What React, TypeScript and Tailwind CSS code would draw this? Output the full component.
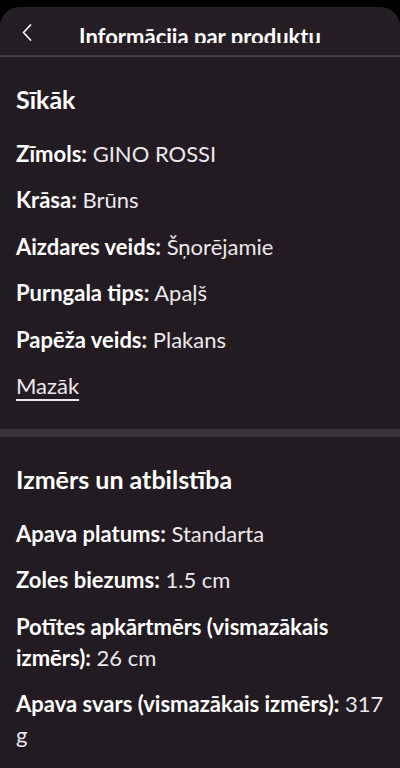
import React from "react";

const details = [
  { label: "Zīmols:", value: "GINO ROSSI" },
  { label: "Krāsa:", value: "Brūns" },
  { label: "Aizdares veids:", value: "Šņorējamie" },
  { label: "Purngala tips:", value: "Apaļš" },
  { label: "Papēža veids:", value: "Plakans" },
];

const sizeFit = [
  { label: "Apava platums:", value: "Standarta" },
  { label: "Zoles biezums:", value: "1.5 cm" },
  { label: "Potītes apkārtmērs (vismazākais izmērs):", value: "26 cm" },
  { label: "Apava svars (vismazākais izmērs):", value: "317 g" },
];

const Row = ({ label, value }: { label: string; value: string }) => (
  <p className="text-[22px] leading-[31px] text-[#ece8ec]">
    <span className="font-bold text-white">{label}</span> {value}
  </p>
);

export default function App() {
  return (
    <div className="min-h-[768px] bg-black pt-[7px] font-['Lato','Liberation_Sans',sans-serif] overflow-hidden">
      <div className="rounded-t-[20px] bg-[#221b21] min-h-[761px]">
        <header className="grid grid-cols-[48px_1fr_48px] h-[50px] bg-[#261e25] rounded-t-[20px] border-b-2 border-[#463c44]">
          <div className="pl-[21px] pt-[16px]">
            <svg width="12" height="19" viewBox="0 0 12 19" fill="none">
              <path d="M9.5 2 L2.5 9.5 L9.5 17" stroke="#f4f0f4" strokeWidth="1.8" strokeLinecap="round" strokeLinejoin="round" />
            </svg>
          </div>
          <div className="pt-[16px] h-[36px] overflow-hidden">
            <h1 className="text-[22px] leading-[28px] font-bold text-white text-center whitespace-nowrap">
              Informācija par produktu
            </h1>
          </div>
          <div />
        </header>

        <section className="px-4 pt-[27px] pb-[28px]">
          <h2 className="text-[25px] leading-[30px] font-bold text-white">Sīkāk</h2>
          <div className="mt-[23.5px] flex flex-col gap-[15.5px]">
            {details.map((d) => (
              <Row key={d.label} label={d.label} value={d.value} />
            ))}
            <a className="text-[22px] leading-[31px] text-[#ece8ec] underline decoration-[1.5px] underline-offset-[5px] self-start">
              Mazāk
            </a>
          </div>
        </section>

        <div className="h-[8px] bg-[#3b333a]" />

        <section className="px-4 pt-[27px] pb-6">
          <h2 className="text-[25px] leading-[30px] font-bold text-white">Izmērs un atbilstība</h2>
          <div className="mt-[23.5px] flex flex-col gap-[15.5px]">
            {sizeFit.map((d) => (
              <Row key={d.label} label={d.label} value={d.value} />
            ))}
          </div>
        </section>
      </div>
    </div>
  );
}
